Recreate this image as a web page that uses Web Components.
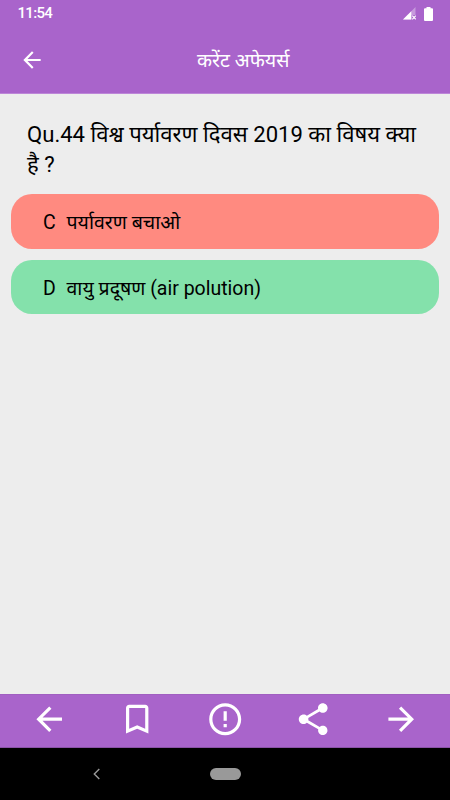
<!DOCTYPE html>
<html lang="hi">
<head>
<meta charset="utf-8">
<title>करेंट अफेयर्स</title>
<style>
body{margin:0;background:#ededed;font-family:Roboto,"Noto Sans Devanagari","Noto Sans",sans-serif}
</style>
</head>
<body>
<quiz-screen></quiz-screen>
<script>
const define=(name,html)=>customElements.define(name,class extends HTMLElement{
  constructor(){super();this.attachShadow({mode:'open'}).innerHTML=html;}
});
const icons={
  back:'M20 11H7.83l5.59-5.59L12 4l-8 8 8 8 1.41-1.41L7.83 13H20v-2z',
  next:'M12 4l-1.41 1.41L16.17 11H4v2h12.17l-5.58 5.59L12 20l8-8z',
  bookmark:'M17 3H7c-1.1 0-1.99.9-1.99 2L5 21l7-3 7 3V5c0-1.1-.9-2-2-2zm0 15l-5-2.18L7 18V5h10v13z',
  info:'M11 15h2v2h-2zm0-8h2v6h-2zm.99-5C6.47 2 2 6.48 2 12s4.47 10 9.99 10C17.52 22 22 17.52 22 12S17.52 2 11.99 2zM12 20c-4.42 0-8-3.58-8-8s3.58-8 8-8 8 3.58 8 8-3.58 8-8 8z',
  share:'M18 16.08c-.76 0-1.44.3-1.96.77L8.91 12.7c.05-.23.09-.46.09-.7s-.04-.47-.09-.7l7.05-4.11c.54.5 1.25.81 2.04.81 1.66 0 3-1.34 3-3s-1.34-3-3-3-3 1.34-3 3c0 .24.04.47.09.7L8.04 9.81C7.5 9.31 6.79 9 6 9c-1.66 0-3 1.34-3 3s1.34 3 3 3c.79 0 1.5-.31 2.04-.81l7.12 4.16c-.05.21-.08.43-.08.65 0 1.61 1.31 2.92 2.92 2.92s2.92-1.31 2.92-2.92-1.31-2.92-2.92-2.92z'
};
customElements.define('app-icon',class extends HTMLElement{
  constructor(){super();this.attachShadow({mode:'open'});}
  connectedCallback(){
    this.shadowRoot.innerHTML=`<style>:host{display:block;width:var(--size,38.4px);height:var(--size,38.4px)}svg{display:block;width:100%;height:100%}</style>
    <svg viewBox="0 0 24 24" fill="#fff"><path d="${icons[this.getAttribute('name')]}"/></svg>`;
  }
});
define('status-bar',`<style>
:host{display:flex;justify-content:space-between;align-items:center;height:27px;padding:0 17px 0 17.5px;color:#fff;box-sizing:border-box;font:500 15px/27px Roboto,sans-serif}
time{letter-spacing:-.7px}
.icons{display:flex;gap:8px;align-items:center}
svg{display:block}
</style><time>11:54</time><div class="icons">
<svg width="13" height="13" viewBox="0 0 13 13"><path d="M12.500 0V8H8.500V12.500H0z" fill="#fff" fill-opacity=".35"/><path d="M8.300 4.200V12.500H0z" fill="#fff"/><path d="M9.300 8.700l3.500 3.600M12.800 8.700l-3.500 3.600" stroke="#fff" stroke-width="1.200"/></svg>
<svg width="9" height="14" viewBox="0 0 9 14"><path d="M2.500 0h4v1.300H8q1 0 1 1V13q0 1-1 1H1q-1 0-1-1V2.300q0-1 1-1h1.500z" fill="#fff"/></svg></div>`);
define('title-bar',`<style>
:host{display:grid;grid-template-columns:38px 1fr;align-items:center;height:66px;padding:0 0 0 18.500px;box-sizing:border-box;color:#fff;--size:26px;font-size:19.6px;line-height:30px}
h1{margin:0 20px 0 0;padding-top:2px;text-align:center;font:inherit;white-space:nowrap}
</style><app-icon name="back"></app-icon><h1><slot></slot></h1>`);
define('quiz-question',`<style>
:host{display:block;padding:25px 27px 0;font-size:22.1px;line-height:30px;color:#000;box-sizing:border-box;height:100px}
</style><slot></slot>`);
define('quiz-option',`<style>
:host{display:flex;align-items:baseline;height:54.500px;line-height:57px;box-sizing:border-box;padding:0 32px;border-radius:21px;background:var(--fill);font-size:19.5px;color:#000;white-space:nowrap}
.key{width:23.500px}
</style><span class="key"><slot name="key"></slot></span><span><slot></slot></span>`);
define('action-bar',`<style>
:host{display:flex;justify-content:space-between;align-items:center;height:54px;padding:0 30px 3px;box-sizing:border-box;background:#a964cb;border-top:1px solid #a15fc1;border-bottom:1px solid #8a52a6}
</style><app-icon name="back"></app-icon><app-icon name="bookmark"></app-icon><app-icon name="info"></app-icon><app-icon name="share"></app-icon><app-icon name="next"></app-icon>`);
define('system-nav',`<style>
:host{display:grid;grid-template-columns:1fr 31px 1fr;align-items:center;height:52px;box-sizing:border-box;background:#000}
svg{justify-self:center;margin-right:15px}
i{display:block;height:11.500px;border-radius:6px;background:#999}
</style><svg width="8" height="12" viewBox="0 0 8 12"><path d="M6.300 1L1.300 6l5 5" fill="none" stroke="#999" stroke-width="1.400"/></svg><i></i>`);
define('quiz-screen',`<style>
:host{display:flex;flex-direction:column;height:800px;width:450px;overflow:hidden;background:#ededed}
header{background:#a964cb;height:94px;flex:none;box-sizing:border-box;border-bottom:1px solid #bd86d8}
main{flex:1}
.options{display:flex;flex-direction:column;gap:11px;padding:0 11px}
</style>
<header><status-bar></status-bar><title-bar>करेंट अफेयर्स</title-bar></header>
<main><quiz-question>Qu.44 विश्व पर्यावरण दिवस 2019 का विषय क्या है ?</quiz-question>
<div class="options">
<quiz-option style="--fill:#ff8a80"><span slot="key">C</span>पर्यावरण बचाओ</quiz-option>
<quiz-option style="--fill:#84e1ab"><span slot="key">D</span>वायु प्रदूषण (air polution)</quiz-option>
</div></main>
<action-bar></action-bar><system-nav></system-nav>`);
</script>
</body>
</html>
